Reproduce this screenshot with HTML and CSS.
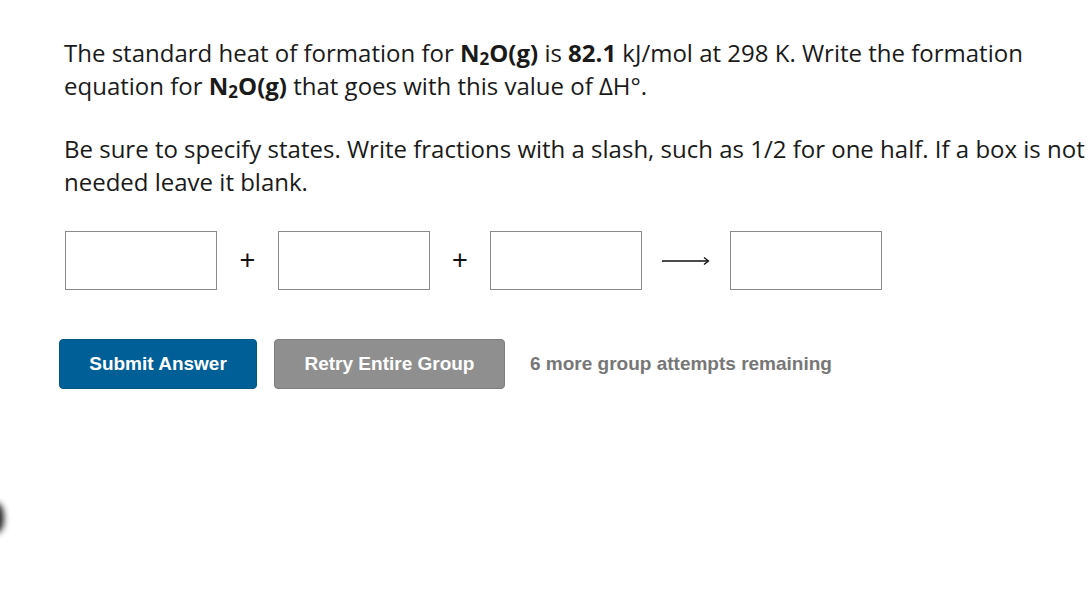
FILE: index.html
```html
<!DOCTYPE html>
<html lang="en">
<head>
<meta charset="utf-8">
<title>Formation equation</title>
<link rel="stylesheet" href="styles.css">
</head>
<body>
  <main class="question">
    <p class="prompt">The standard heat of formation for <b>N<sub>2</sub>O(g)</b> is <b>82.1</b> kJ/mol at 298 K. Write the formation equation for <b>N<sub>2</sub>O(g)</b> that goes with this value of ΔH°.</p>
    <p class="prompt">Be sure to specify states. Write fractions with a slash, such as 1/2 for one half. If a box is not needed leave it blank.</p>

    <div class="equation">
      <input class="slot" type="text" aria-label="Reactant 1">
      <span class="op">+</span>
      <input class="slot" type="text" aria-label="Reactant 2">
      <span class="op op-narrow">+</span>
      <input class="slot" type="text" aria-label="Reactant 3">
      <svg class="arrow" width="48" height="12" viewBox="0 0 48 12" aria-hidden="true">
        <line x1="0" y1="6" x2="46" y2="6" stroke="#111" stroke-width="1.6"/>
        <path d="M42 2.5 L46.5 6 L42 9.5" fill="none" stroke="#111" stroke-width="1.3"/>
      </svg>
      <input class="slot" type="text" aria-label="Product">
    </div>

    <div class="actions">
      <button class="btn btn-submit" type="button">Submit Answer</button>
      <button class="btn btn-retry" type="button">Retry Entire Group</button>
      <span class="attempts">6 more group attempts remaining</span>
    </div>
  </main>
  <div class="edge-tab" aria-hidden="true"></div>
</body>
</html>
```
FILE: styles.css
```css
html, body {
  margin: 0;
  padding: 0;
  background: #fff;
}

body {
  font-family: "Open Sans", "Liberation Sans", sans-serif;
  color: #1a1a1a;
  overflow: hidden;
  height: 600px;
}

.question {
  padding: 36px 0 0 64px;
}

.prompt {
  margin: 0 0 30px;
  font-size: 24px;
  line-height: 33px;
  max-width: 1026px;
}

.prompt b {
  font-weight: 700;
}

.prompt sub {
  font-size: 17px;
  line-height: 1;
  vertical-align: -3px;
}

.equation {
  display: flex;
  align-items: center;
  margin-top: 33px;
  padding-left: 1px;
}

.slot {
  box-sizing: border-box;
  width: 152px;
  height: 59px;
  border: 1px solid #8a8a8a;
  border-radius: 0;
  background: #fff;
  margin: 0;
  padding: 0;
}

.op {
  width: 61px;
  text-align: center;
  font-family: "Liberation Sans", Arial, sans-serif;
  font-size: 27px;
  line-height: 1;
  color: #111;
}

.op-narrow {
  width: 60px;
}

.arrow {
  margin: 0 20px;
}

.actions {
  display: flex;
  align-items: center;
  margin-top: 49px;
  margin-left: -5px;
}

.btn {
  box-sizing: border-box;
  height: 50px;
  border-radius: 4px;
  font-family: "Liberation Sans", Arial, sans-serif;
  font-weight: 700;
  font-size: 19px;
  color: #fff;
  padding: 0;
  cursor: pointer;
}

.btn-submit {
  width: 198px;
  background: #005f96;
  border: 1px solid #005886;
}

.btn-retry {
  width: 231px;
  margin-left: 17px;
  background: #8f8f8f;
  border: 1px solid #7e7e7e;
}

.attempts {
  margin-left: 25px;
  font-family: "Liberation Sans", Arial, sans-serif;
  font-weight: 700;
  font-size: 19px;
  color: #777;
}

.edge-tab {
  position: absolute;
  left: -10px;
  top: 503px;
  width: 14px;
  height: 30px;
  border-radius: 50%;
  background: #222;
  filter: blur(3px);
}
```
